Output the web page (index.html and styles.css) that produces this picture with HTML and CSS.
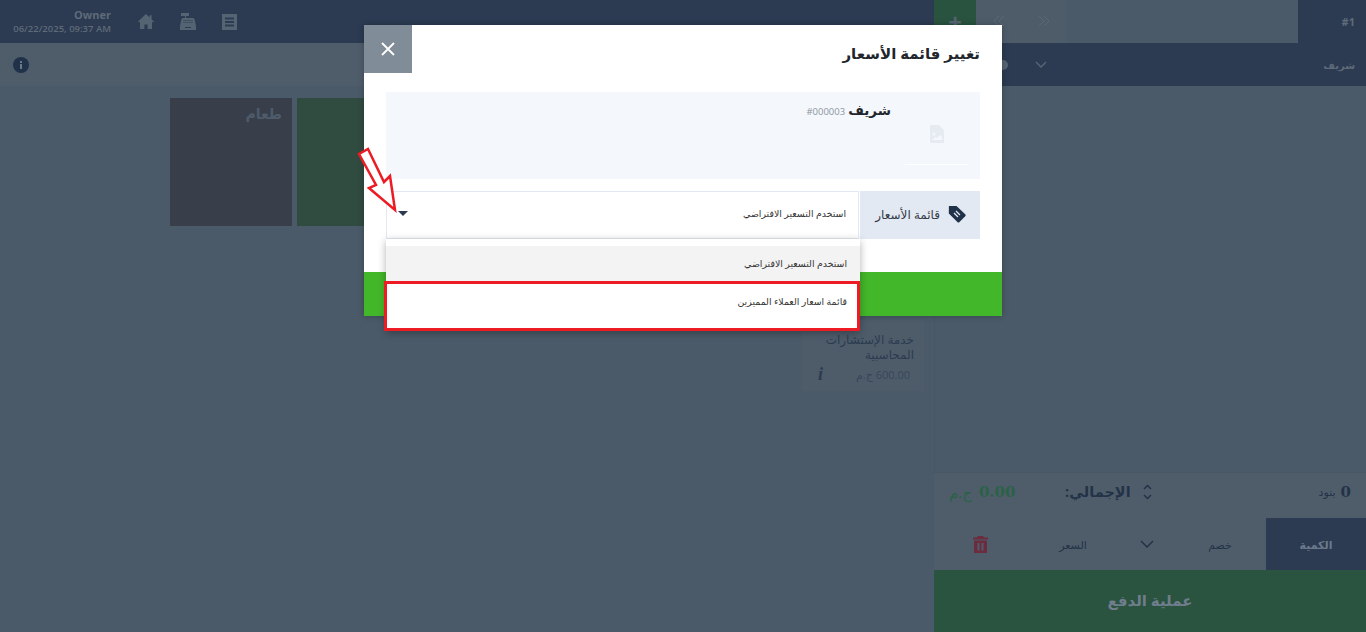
FILE: index.html
```html
<!DOCTYPE html>
<html lang="ar">
<head>
  <meta charset="UTF-8">
  <meta name="viewport" content="width=device-width, initial-scale=1.0">
  <title>تغيير قائمة الأسعار</title>
  <link rel="stylesheet" href="styles.css">
</head>
<body>
  <div class="pos">
    <div class="main">
      <header class="topbar">
        <div class="user">
          <div class="user-name">Owner</div>
          <div class="user-date">06/22/2025, 09:37 AM</div>
        </div>
        <div class="top-icons">
          <svg width="16" height="15" viewBox="0 0 16 15"><path d="M8 0L0 7.4l1 1L2 7.6V15h4.4v-4.6h3.2V15H14V7.6l1 .8 1-1-2.400-2.200V1.200h-2v2.200z"/></svg>
          <svg width="16" height="17" viewBox="0 0 16 17"><path d="M1 0h8v3H6v2h7l1.500 1L16 13v4H0v-4l1.500-7L3 5h2V3H1zM3.500 7v1h1V7zm2 0v1h1V7zm2 0v1h1V7zm2 0v1h1V7zm2 0v1h1V7zM3.500 9v1h1V9zm2 0v1h1V9zm2 0v1h1V9zm2 0v1h1V9zm2 0v1h1V9zM5 14v1h6v-1z" fill-rule="evenodd"/></svg>
          <svg width="15" height="16" viewBox="0 0 15 16"><path d="M0 0h15v16H0zM3 3.500v2h9v-2zm0 3.500v2h9V7zm0 3.500v2h9v-2z" fill-rule="evenodd"/></svg>
        </div>
      </header>
      <div class="infobar">
        <svg class="info-icon" width="16" height="16" viewBox="0 0 16 16"><circle cx="8" cy="8" r="8"/><rect x="7" y="7" width="2" height="5" fill="#6b7885"/><rect x="7" y="4" width="2" height="2" fill="#6b7885"/></svg>
      </div>
      <div class="categories">
        <div class="cat cat-dark" dir="rtl">طعام</div>
        <div class="cat cat-green"></div>
      </div>
      <div class="products">
        <div class="product" dir="rtl">
          <div class="product-name">خدمة الإستشارات المحاسبية</div>
          <div class="product-foot">
            <span class="product-price">600.00 ج.م</span>
            <span class="product-info">i</span>
          </div>
        </div>
      </div>
    </div>

    <aside class="side">
      <div class="side-tabs">
        <div class="add-btn">+</div>
        <div class="nav-btn"><svg width="12" height="12" viewBox="0 0 12 12"><path d="M6 1L1 6l5 5M11 1L6 6l5 5" fill="none"/></svg></div>
        <div class="nav-btn"><svg width="12" height="12" viewBox="0 0 12 12"><path d="M1 1l5 5-5 5M6 1l5 5-5 5" fill="none"/></svg></div>
        <div class="tab-space"></div>
        <div class="tab-num">#1</div>
      </div>
      <div class="side-customer">
        <span class="cust-dot"></span>
        <svg class="cust-chev" width="12" height="7" viewBox="0 0 12 7"><path d="M1 1l5 5 5-5" fill="none" stroke-width="1.500"/></svg>
        <span class="cust-name" dir="rtl">شريف</span>
      </div>
      <div class="cart"></div>
      <div class="totals">
        <div class="total-amount"><span class="cur">ج.م</span><b>0.00</b></div>
        <div class="total-label">
          <span dir="rtl">الإجمالي:</span>
          <svg width="9" height="16" viewBox="0 0 9 16"><path d="M1 5l3.500-3.500L8 5M1 11l3.500 3.500L8 11" fill="none" stroke-width="1.500"/></svg>
        </div>
        <div class="total-count"><span dir="rtl">بنود</span><b>0</b></div>
      </div>
      <div class="actions">
        <div class="act act-trash"><svg width="15" height="17" viewBox="0 0 15 17"><path d="M5 0h5l1 1.500h4v2H0v-2h4zM1 4.500h13V17H1zM4.500 7v7.500h2V7zm4 0v7.500h2V7z" fill-rule="evenodd"/></svg></div>
        <div class="act" dir="rtl">السعر</div>
        <div class="act"><svg class="act-chev" width="14" height="8" viewBox="0 0 14 8"><path d="M1 1l6 6 6-6" fill="none" stroke-width="1.500"/></svg></div>
        <div class="act" dir="rtl">خصم</div>
        <div class="act act-on" dir="rtl">الكمية</div>
      </div>
      <div class="pay" dir="rtl">عملية الدفع</div>
    </aside>
  </div>

  <div class="modal">
    <div class="modal-head">
      <div class="modal-close"><svg width="14" height="14" viewBox="0 0 14 14"><path d="M1 1l12 12M13 1L1 13" fill="none" stroke="#fff" stroke-width="1.800"/></svg></div>
      <h2 class="modal-title" dir="rtl">تغيير قائمة الأسعار</h2>
    </div>
    <div class="modal-body">
      <div class="cust-box">
        <div class="cust-text">
          <span class="cust-code">#000003</span>
          <span class="cust-big" dir="rtl">شريف</span>
        </div>
        <div class="cust-img">
          <svg width="14" height="18" viewBox="0 0 14 18"><path d="M0 0h9l5 5v13H0zM4 7.500a1.500 1.500 0 100 3 1.500 1.500 0 000-3zM2 15h10v-3l-2-2-3 3-1.500-1z" fill-rule="evenodd"/></svg>
        </div>
      </div>
      <div class="price-row">
        <div class="select">
          <span class="caret"></span>
          <span class="select-text" dir="rtl">استخدم التسعير الافتراضي</span>
        </div>
        <div class="price-label">
          <span dir="rtl">قائمة الأسعار</span>
          <svg width="18" height="18" viewBox="0 0 18 18"><path d="M9.500 .8L17 .9l.1 7.600-8.300 8.700a1.500 1.500 0 01-2.100 0L1 11.500a1.500 1.500 0 010-2.100z" transform="rotate(-90 9 9)"/><path d="M6 8l4 4M8 6l4 4" stroke="#e3e9f2" stroke-width="1.200"/></svg>
        </div>
        <div class="dropdown">
          <div class="option option-current" dir="rtl">استخدم التسعير الافتراضي</div>
          <div class="option option-marked" dir="rtl">قائمة اسعار العملاء المميزين</div>
        </div>
      </div>
    </div>
    <div class="modal-foot"></div>
  </div>

  <svg class="pointer" width="44" height="70" viewBox="0 0 44 70"><polygon points="11,3 27,36 33,30 38,64 12,42 19,39 2,8" fill="#fff" stroke="#ed1c24" stroke-width="2.500"/></svg>
</body>
</html>
```

FILE: styles.css
```css
* {
  box-sizing: border-box;
}
html, body {
  height: 100%;
}
body {
  margin: 0;
  overflow: hidden;
  background: #4a5a68;
  font-family: "Open Sans", "DejaVu Sans", sans-serif;
}
.pos {
  display: flex;
  height: 632px;
}
.main {
  width: 934px;
}
.topbar {
  display: flex;
  align-items: center;
  height: 43px;
  background: #2c3a52;
}
.user {
  width: 111px;
  text-align: right;
  color: #5e6b79;
}
.user-name {
  font-size: 11px;
  font-weight: 700;
  line-height: 14px;
}
.user-date {
  font-size: 9.500px;
  font-weight: 600;
  line-height: 14px;
  white-space: nowrap;
}
.top-icons {
  display: flex;
  align-items: center;
  gap: 26px;
  margin-left: 27px;
}
.top-icons svg {
  fill: #556473;
}
.infobar {
  display: flex;
  align-items: center;
  height: 43px;
  padding-left: 13px;
  background: #4f5d6b;
}
.info-icon {
  fill: #1f3249;
}
.categories {
  display: flex;
  gap: 5px;
  margin: 12px 0 0 170px;
}
.cat {
  width: 122px;
  height: 128px;
  padding: 6px 10px;
  font-size: 14px;
  font-weight: 700;
  color: #4d5b6a;
}
.cat-dark {
  background: #383e4a;
}
.cat-green {
  width: 200px;
  background: #304b40;
}
.products {
  display: flex;
  justify-content: flex-end;
  padding-right: 10px;
  margin-top: 94px;
}
.product {
  width: 122px;
  height: 71px;
  padding: 12px 10px 0 16px;
  background: #4e5c6a;
  color: #2b3b50;
}
.product-name {
  font-size: 12px;
  line-height: 15px;
}
.product-foot {
  display: flex;
  justify-content: space-between;
  align-items: center;
  margin-top: 3px;
}
.product-price {
  padding-right: 4px;
  font-size: 11px;
  color: #36475b;
}
.product-info {
  font-family: "Liberation Serif", serif;
  font-style: italic;
  font-weight: 700;
  font-size: 18px;
  line-height: 18px;
  color: #2b3b50;
}
.side {
  flex: 1;
  display: flex;
  flex-direction: column;
}
.side-tabs {
  display: flex;
  height: 43px;
}
.add-btn {
  width: 42px;
  background: #29533f;
  color: #556473;
  font-size: 24px;
  font-weight: 700;
  line-height: 43px;
  text-align: center;
}
.nav-btn {
  display: flex;
  align-items: center;
  justify-content: center;
  width: 45px;
  padding-bottom: 2px;
  background: #4e5c6a;
}
.nav-btn svg {
  stroke: #5a6876;
}
.tab-space {
  flex: 1;
}
.tab-num {
  width: 68px;
  padding-right: 11px;
  background: #2c3a52;
  color: #5e6b79;
  font-size: 11px;
  font-weight: 700;
  line-height: 43px;
  text-align: right;
}
.side-customer {
  display: flex;
  align-items: center;
  height: 43px;
  padding-right: 30px;
  background: #2c3a52;
}
.cust-dot {
  width: 10px;
  height: 10px;
  margin-left: 64px;
  border-radius: 50%;
  background: #556473;
}
.cust-chev {
  margin-left: 27px;
  stroke: #556473;
}
.cust-name {
  margin-left: auto;
  margin-right: -19px;
  color: #5e6b79;
  font-size: 10px;
  font-weight: 700;
}
.cart {
  flex: 1;
  border-left: 1px solid #475765;
}
.totals {
  display: flex;
  align-items: center;
  height: 46px;
  padding: 0 15px 8px;
  background: #4f5d6b;
  border-top: 1px solid #475765;
  color: #233347;
}
.total-amount {
  display: flex;
  align-items: center;
  gap: 7px;
  width: 116px;
  color: #2a6246;
  font-size: 15px;
}
.total-amount b {
  font-family: "DejaVu Serif", serif;
  font-size: 15px;
}
.total-label {
  display: flex;
  align-items: center;
  gap: 12px;
  font-size: 14.500px;
  font-weight: 700;
}
.total-label svg {
  stroke: #233347;
}
.total-count {
  display: flex;
  align-items: center;
  gap: 5px;
  margin-left: auto;
  font-size: 11px;
}
.total-count b {
  font-family: "DejaVu Serif", serif;
  font-size: 15px;
}
.actions {
  display: grid;
  grid-template-columns: 92px 94px 54px 92px 100px;
  height: 52px;
  background: #4f5d6b;
}
.act {
  display: flex;
  align-items: center;
  justify-content: center;
  color: #233347;
  font-size: 11px;
}
.act-trash svg {
  fill: #6b2c3e;
}
.act-chev {
  stroke: #233347;
}
.act-on {
  background: #2c3a52;
  color: #6b7a8b;
  font-weight: 700;
}
.pay {
  display: flex;
  align-items: center;
  justify-content: center;
  height: 62px;
  padding-bottom: 2px;
  background: #2a5340;
  color: #6f7d8c;
  font-size: 15px;
  font-weight: 700;
}

/* modal sits over the dimmed page */
.modal {
  position: absolute;
  left: 364px;
  top: 25px;
  display: flex;
  flex-direction: column;
  width: 638px;
  height: 291px;
  background: #fff;
  box-shadow: 0 0 6px rgba(0,0,0,0.25);
}
.modal-head {
  display: flex;
  justify-content: space-between;
  align-items: flex-start;
  height: 67px;
}
.modal-close {
  display: flex;
  align-items: center;
  justify-content: center;
  width: 48px;
  height: 48px;
  background: #808c98;
}
.modal-title {
  margin: 14px 22px 0 0;
  font-size: 15px;
  font-weight: 600;
  line-height: 28px;
  color: #22262c;
}
.modal-body {
  padding: 0 22px;
}
.cust-box {
  display: flex;
  justify-content: flex-end;
  height: 87px;
  background: #f4f7fb;
}
.cust-text {
  display: flex;
  align-items: baseline;
  gap: 3px;
  margin: 9px 14px 0 0;
  height: 26px;
}
.cust-code {
  color: #8c96a3;
  font-size: 9.500px;
}
.cust-big {
  color: #22262c;
  font-size: 13.500px;
  font-weight: 700;
}
.cust-img {
  display: flex;
  justify-content: center;
  width: 63px;
  height: 73px;
  margin-right: 12px;
  padding-top: 33px;
  border-bottom: 1px solid #fff;
}
.cust-img svg {
  fill: #e6ebf2;
}
.price-row {
  position: relative;
  display: flex;
  height: 48px;
  margin-top: 12px;
}
.select {
  display: flex;
  justify-content: space-between;
  align-items: center;
  flex: 1;
  padding: 0 12px 3px 11px;
  border: 1px solid #e3e9f2;
}
.caret {
  width: 0;
  height: 0;
  border-left: 5px solid transparent;
  border-right: 5px solid transparent;
  border-top: 5px solid #2c3a52;
}
.select-text, .option {
  color: #333;
  font-size: 9.400px;
}
.price-label {
  display: flex;
  align-items: center;
  justify-content: flex-end;
  gap: 8px;
  width: 120px;
  margin-left: 1px;
  padding: 0 14px 2px 0;
  background: #e3e9f2;
  color: #333b47;
  font-size: 12px;
}
.price-label svg {
  fill: #1f3249;
}
.dropdown {
  position: absolute;
  left: 0;
  top: 48px;
  width: 474px;
  height: 92px;
  padding-top: 7px;
  background: #fff;
  box-shadow: 0 2px 8px rgba(0,0,0,0.3);
}
.option {
  height: 35px;
  padding: 0 13px;
  line-height: 35px;
}
.option-current {
  background: #f3f3f3;
}
.option-marked {
  height: 50px;
  margin-left: -2px;
  padding: 0 10px;
  border: 3px solid #ed1c24;
  background: #fff;
  line-height: 36px;
}
.modal-foot {
  height: 44px;
  margin-top: auto;
  background: #43b72a;
}
.pointer {
  position: absolute;
  left: 357px;
  top: 146px;
}
```
